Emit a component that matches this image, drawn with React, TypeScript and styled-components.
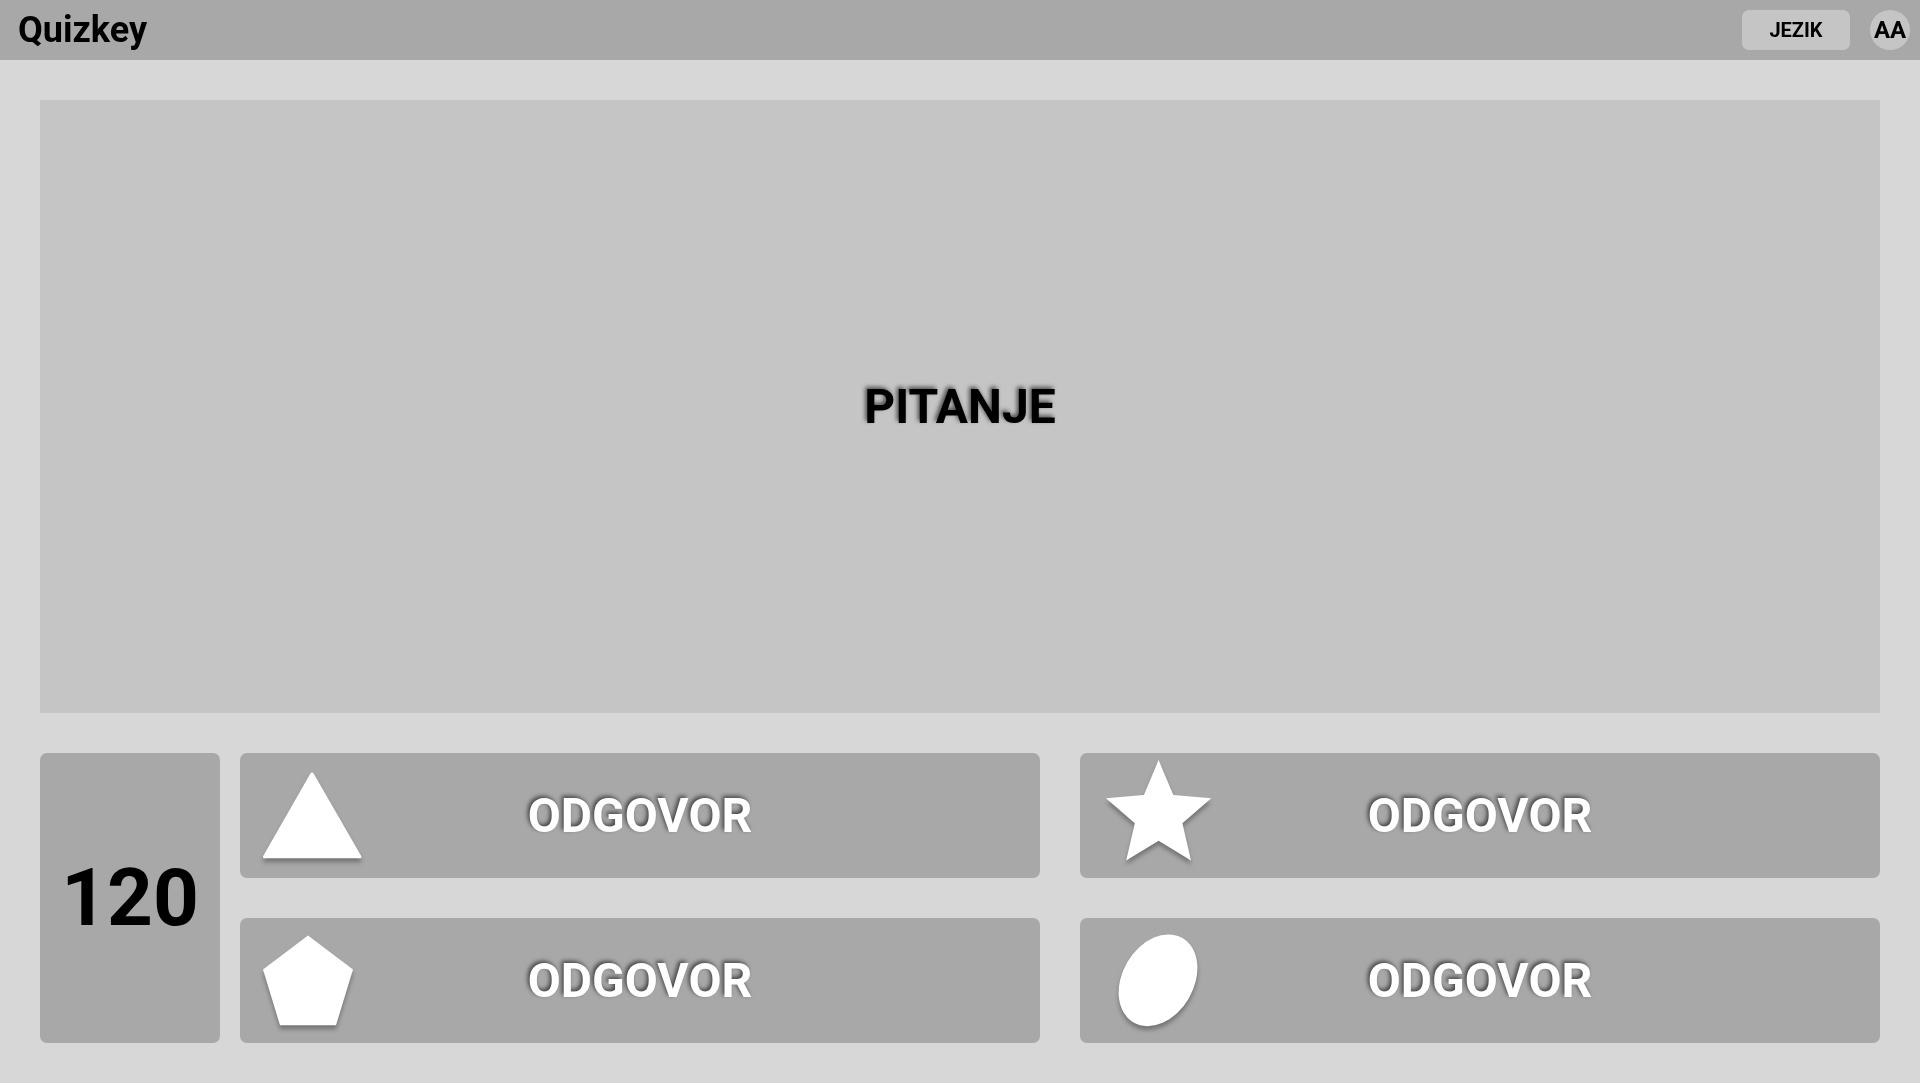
import React from "react";
import styled, { createGlobalStyle } from "styled-components";

const GlobalStyle = createGlobalStyle`
  *, *::before, *::after { box-sizing: border-box; }
  body {
    margin: 0;
    background: #d7d7d7;
    color: #000;
    font-family: Roboto, "Liberation Sans", sans-serif;
    font-weight: 700;
  }
  button { font: inherit; color: inherit; border: 0; cursor: pointer; }
`;

const Page = styled.div`
  display: flex;
  flex-direction: column;
  min-height: 100vh;
  will-change: transform;
`;

const Header = styled.header`
  display: flex;
  align-items: center;
  gap: 20px;
  height: 60px;
  padding: 0 10px 0 18px;
  background: #a8a8a8;
`;

const Brand = styled.h1`
  margin: 0 auto 0 0;
  font-size: 36px;
  line-height: 40px;
`;

const LanguageButton = styled.button`
  width: 108px;
  height: 40px;
  padding: 0;
  border-radius: 7px;
  background: #c5c5c5;
  && { font-size: 20px; }
`;

const Avatar = styled.button`
  display: flex;
  align-items: center;
  justify-content: center;
  width: 40px;
  height: 40px;
  padding: 0;
  border-radius: 50%;
  background: #c5c5c5;
  && { font-size: 24px; }
`;

const Main = styled.main`
  flex: 1;
  display: flex;
  flex-direction: column;
  gap: 40px;
  padding: 40px;
`;

const Question = styled.section`
  flex: 1;
  display: flex;
  align-items: center;
  justify-content: center;
  background: #c5c5c5;
`;

const QuestionText = styled.h2`
  margin: 0;
  font-size: 48px;
  line-height: 56px;
  text-shadow: -2px -2px 4px rgba(0, 0, 0, 0.6);
`;

const Controls = styled.div`
  display: flex;
  gap: 20px;
`;

const Timer = styled.div`
  display: flex;
  align-items: center;
  justify-content: center;
  width: 180px;
  border-radius: 7px;
  background: #a8a8a8;
  font-size: 80px;
  line-height: 96px;
`;

const Answers = styled.div`
  flex: 1;
  display: grid;
  grid-template-columns: repeat(2, 1fr);
  gap: 40px;
`;

const Answer = styled.button`
  display: grid;
  grid-template-columns: 1fr auto 1fr;
  align-items: center;
  padding: 0;
  border-radius: 7px;
  background: #a8a8a8;
  && { color: #fff; font-size: 48px; line-height: 56px; }
`;

const AnswerText = styled.span`
  text-shadow: -2px -2px 4px rgba(0, 0, 0, 0.6);
`;

const Shape = styled.svg`
  display: block;
  width: 160px;
  height: 125px;
  fill: #fff;
  filter: drop-shadow(0 4px 2px rgba(0, 0, 0, 0.3));
`;

const answers = [
  {
    id: "triangle",
    text: "ODGOVOR",
    shape: (
      <path d="M70.4 20.6Q72 18.4 73.6 20.6L121.2 103Q122 105.3 120 105.3H24.5Q22.5 105.3 23.2 103Z" />
    ),
  },
  {
    id: "star",
    text: "ODGOVOR",
    shape: (
      <path d="M78.6 7L93.3 42L131.2 45.3L102.4 70.3L111 107.5L78.6 87.7L46.2 107.5L54.8 70.3L26 45.3L63.9 42Z" />
    ),
  },
  {
    id: "pentagon",
    text: "ODGOVOR",
    shape: <path d="M68 17.5L113 51.6L96 107.3H40L23 51.6Z" />,
  },
  {
    id: "ellipse",
    text: "ODGOVOR",
    shape: <ellipse cx="78" cy="62.3" rx="35.7" ry="48.8" transform="rotate(30 78 62.3)" />,
  },
];

export default function App() {
  return (
    <Page>
      <GlobalStyle />
      <Header>
        <Brand>Quizkey</Brand>
        <LanguageButton type="button">JEZIK</LanguageButton>
        <Avatar type="button">AA</Avatar>
      </Header>
      <Main>
        <Question>
          <QuestionText>PITANJE</QuestionText>
        </Question>
        <Controls>
          <Timer role="timer">120</Timer>
          <Answers>
            {answers.map((answer) => (
              <Answer key={answer.id} type="button">
                <Shape viewBox="0 0 160 125" aria-hidden="true">
                  {answer.shape}
                </Shape>
                <AnswerText>{answer.text}</AnswerText>
              </Answer>
            ))}
          </Answers>
        </Controls>
      </Main>
    </Page>
  );
}
